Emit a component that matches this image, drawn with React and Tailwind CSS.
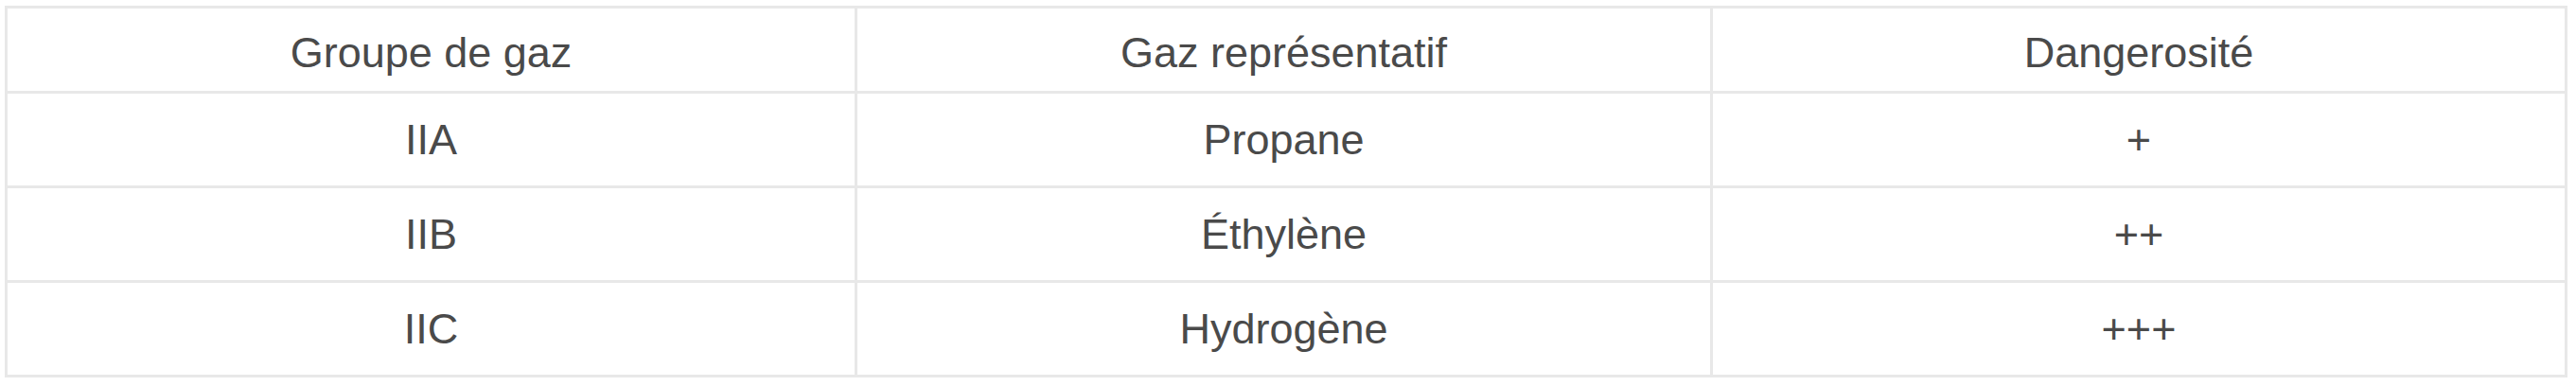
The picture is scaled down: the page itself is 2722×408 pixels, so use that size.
const rows = [
  ['IIA', 'Propane', '+'],
  ['IIB', 'Éthylène', '++'],
  ['IIC', 'Hydrogène', '+++'],
]

const Cell = ({ children, first, head }) => (
  <div className={`flex items-center justify-center ${head ? 'pt-[7px]' : ''} ${first ? '' : 'border-l-[3px] border-[#e8e8e8]'}`}>
    {children}
  </div>
)

export default function App() {
  return (
    <div className="bg-white w-[2722px] h-[408px] pl-[5px] pt-[6px] text-[#4a4a4a] text-[45px]" style={{ fontFamily: '"Liberation Sans", Arial, sans-serif' }}>
      <div className="w-[2708px] border-[3px] border-[#e8e8e8]">
        <div className="grid grid-cols-[895px_904px_1fr] h-[87px]">
          <Cell first head>Groupe de gaz</Cell>
          <Cell head>Gaz représentatif</Cell>
          <Cell head>Dangerosité</Cell>
        </div>
        {rows.map((r) => (
          <div key={r[0]} className="grid grid-cols-[895px_904px_1fr] h-[100px] border-t-[3px] border-[#e8e8e8]">
            <Cell first>{r[0]}</Cell>
            <Cell>{r[1]}</Cell>
            <Cell>{r[2]}</Cell>
          </div>
        ))}
      </div>
    </div>
  )
}
